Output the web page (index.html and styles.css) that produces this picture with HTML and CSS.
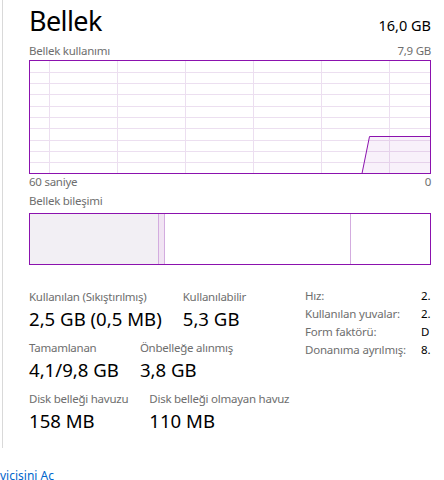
FILE: index.html
```html
<!DOCTYPE html>
<html lang="tr">
<head>
<meta charset="utf-8">
<title>Bellek</title>
<link rel="stylesheet" href="styles.css">
</head>
<body>
<div class="frame">
  <div class="header">
    <h1 class="title">Bellek</h1>
    <span class="total">16,0 GB</span>
  </div>
  <div class="caption-row caption-top">
    <span>Bellek kullanımı</span>
    <span>7,9 GB</span>
  </div>
  <svg class="graph" width="402" height="114" viewBox="0 0 402 114">
    <g stroke="#ecdff0" stroke-width="1">
      <line x1="1" x2="401" y1="12.5" y2="12.5"/>
      <line x1="1" x2="401" y1="23.5" y2="23.5"/>
      <line x1="1" x2="401" y1="34.5" y2="34.5"/>
      <line x1="1" x2="401" y1="46.5" y2="46.5"/>
      <line x1="1" x2="401" y1="57.5" y2="57.5"/>
      <line x1="1" x2="401" y1="68.5" y2="68.5"/>
      <line x1="1" x2="401" y1="80.5" y2="80.5"/>
      <line x1="1" x2="401" y1="91.5" y2="91.5"/>
      <line x1="1" x2="401" y1="102.5" y2="102.5"/>
      <line x1="20.5" x2="20.5" y1="1" y2="113"/>
      <line x1="88.5" x2="88.5" y1="1" y2="113"/>
      <line x1="156.5" x2="156.5" y1="1" y2="113"/>
      <line x1="224.5" x2="224.5" y1="1" y2="113"/>
      <line x1="292.5" x2="292.5" y1="1" y2="113"/>
      <line x1="360.5" x2="360.5" y1="1" y2="113"/>
    </g>
    <polygon points="333,113.5 340.5,76 401,76.5 401,113.5" fill="rgba(139,18,174,0.06)"/>
    <polyline points="333,113.5 340.5,76.5 401,76.5" fill="none" stroke="#8b12ae" stroke-width="1"/>
    <rect x="0.5" y="0.5" width="401" height="113" fill="none" stroke="#8b12ae" stroke-width="1"/>
  </svg>
  <div class="caption-row">
    <span>60 saniye</span>
    <span>0</span>
  </div>
  <div class="caption-row caption-comp">
    <span>Bellek bileşimi</span>
  </div>
  <div class="composition">
    <div class="seg seg-inuse"></div>
    <div class="seg seg-modified"></div>
    <div class="seg seg-standby"></div>
    <div class="seg seg-free"></div>
  </div>
  <div class="stats">
    <div class="stats-left">
      <div class="stat-row">
        <div class="stat">
          <span class="stat-label">Kullanılan (Sıkıştırılmış)</span>
          <span class="stat-value">2,5 GB (0,5 MB)</span>
        </div>
        <div class="stat">
          <span class="stat-label">Kullanılabilir</span>
          <span class="stat-value">5,3 GB</span>
        </div>
      </div>
      <div class="stat-row">
        <div class="stat">
          <span class="stat-label">Tamamlanan</span>
          <span class="stat-value">4,1/9,8 GB</span>
        </div>
        <div class="stat">
          <span class="stat-label">Önbelleğe alınmış</span>
          <span class="stat-value">3,8 GB</span>
        </div>
      </div>
      <div class="stat-row">
        <div class="stat">
          <span class="stat-label">Disk belleği havuzu</span>
          <span class="stat-value">158 MB</span>
        </div>
        <div class="stat">
          <span class="stat-label">Disk belleği olmayan havuz</span>
          <span class="stat-value">110 MB</span>
        </div>
      </div>
    </div>
    <dl class="details">
      <dt>Hız:</dt><dd>2.</dd>
      <dt>Kullanılan yuvalar:</dt><dd>2.</dd>
      <dt>Form faktörü:</dt><dd>D</dd>
      <dt>Donanıma ayrılmış:</dt><dd>8.</dd>
    </dl>
  </div>
</div>
<a class="monitor-link" href="#">vicisini Aç</a>
</body>
</html>
```
FILE: styles.css
```css
html, body {
  margin: 0;
  padding: 0;
}
body {
  width: 444px;
  height: 480px;
  overflow: hidden;
  background: #ffffff;
  font-family: "Noto Sans", "Open Sans", "DejaVu Sans", sans-serif;
  color: #000000;
}
.frame {
  box-sizing: border-box;
  height: 448px;
  margin-left: 2px;
  border-left: 1px solid #d9d9d9;
  padding: 3px 13px 0 26px;
}
.header {
  display: flex;
  justify-content: space-between;
  align-items: baseline;
}
.title {
  margin: 0;
  font-size: 27px;
  font-weight: 400;
  line-height: 36px;
  letter-spacing: -0.6px;
}
.total {
  font-size: 14.5px;
}
.caption-row {
  display: flex;
  justify-content: space-between;
  font-size: 11.5px;
  letter-spacing: -0.25px;
  line-height: 16px;
  color: #6e6e6e;
}
.caption-top {
  margin-top: 4px;
  margin-bottom: 1px;
}
.graph {
  display: block;
}
.caption-comp {
  margin-top: 3px;
  margin-bottom: 4px;
}
.composition {
  display: flex;
  height: 52px;
  box-sizing: border-box;
  border: 1px solid #8b12ae;
}
.seg-inuse {
  width: 128px;
  background: #f2eff4;
}
.seg-modified {
  width: 5px;
  background: #f1e4f3;
  border-left: 1px solid #d3acdf;
  border-right: 1px solid #d3acdf;
}
.seg-standby {
  width: 185px;
  border-right: 1px solid #d3acdf;
}
.seg-free {
  flex: 1;
}
.stats {
  display: flex;
  align-items: flex-start;
  margin-top: 22px;
}
.stats-left {
  width: 276px;
  padding-top: 2px;
}
.stat-row {
  display: flex;
  gap: 21px;
  margin-bottom: 7px;
}
.stat {
  display: flex;
  flex-direction: column;
}
.stat-label {
  font-size: 11.5px;
  letter-spacing: -0.25px;
  line-height: 16px;
  color: #6e6e6e;
  white-space: nowrap;
}
.stat-value {
  font-size: 18.6px;
  line-height: 28px;
  white-space: nowrap;
}
.details {
  display: grid;
  grid-template-columns: 116px auto;
  grid-auto-rows: 18px;
  margin: 0;
  font-size: 11.5px;
  letter-spacing: -0.2px;
  line-height: 18px;
}
.details dt {
  color: #6e6e6e;
  white-space: nowrap;
}
.details dd {
  margin: 0;
  color: #000000;
}
.monitor-link {
  display: block;
  margin-top: 20px;
  font-size: 12px;
  line-height: 16px;
  color: #0066cc;
  text-decoration: none;
}
```
